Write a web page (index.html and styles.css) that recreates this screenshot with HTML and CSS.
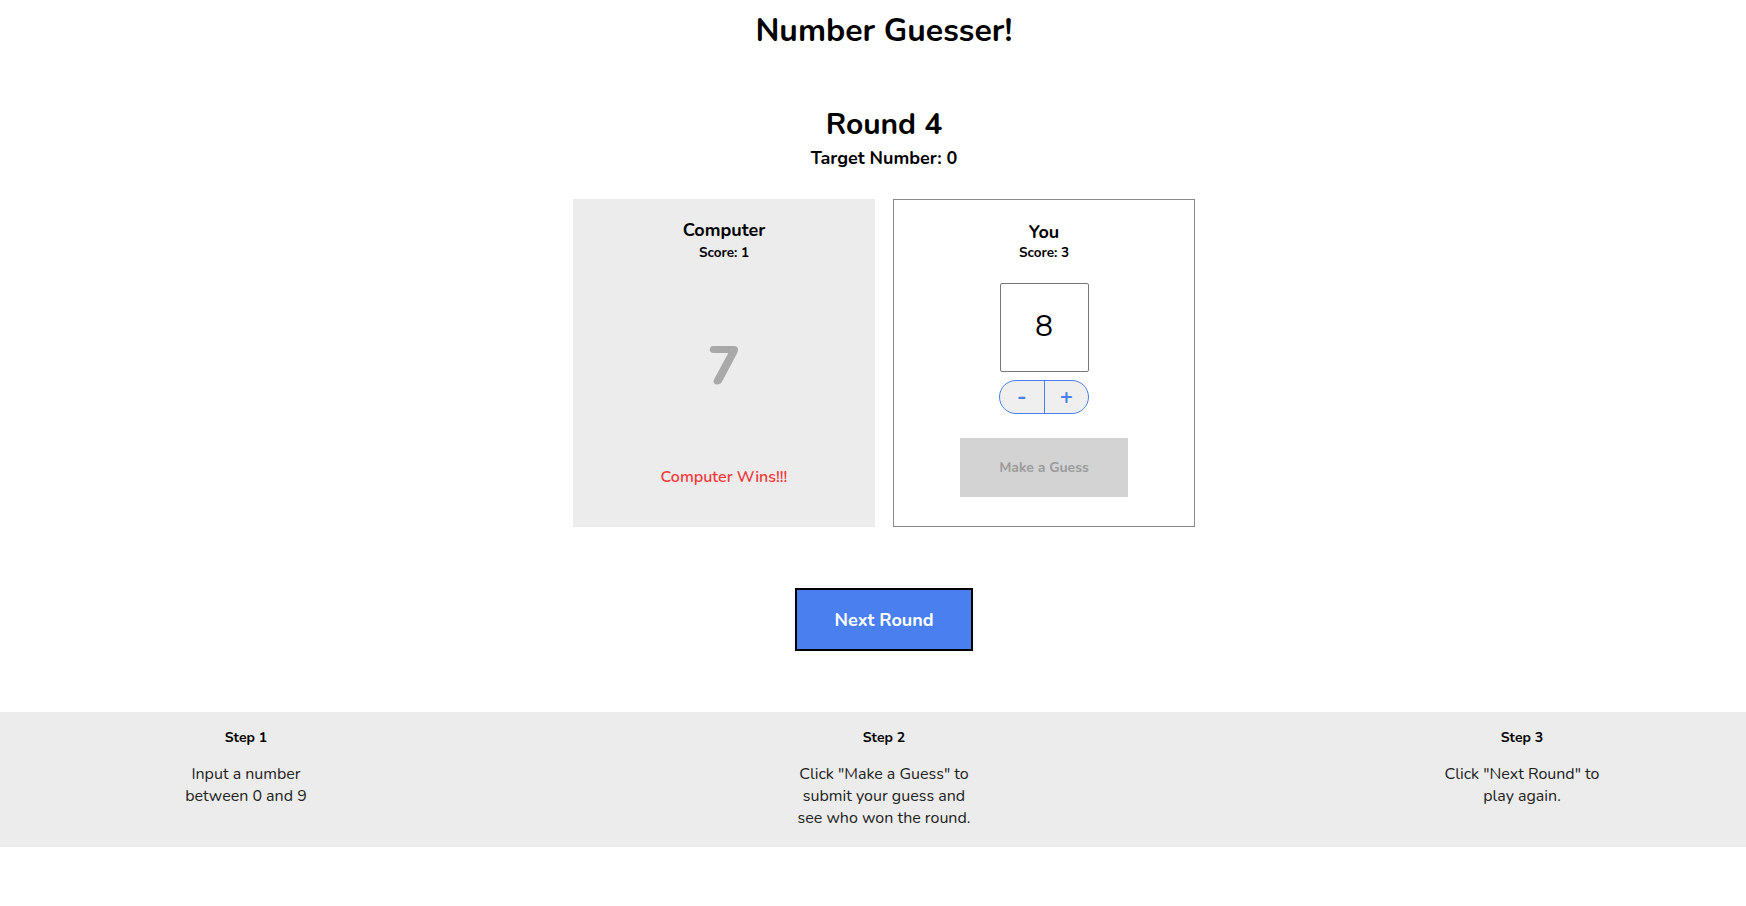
FILE: index.html
```html
<!DOCTYPE html>
<html lang="en">
<head>
<meta charset="utf-8">
<title>Number Guesser!</title>
<link rel="stylesheet" href="styles.css">
</head>
<body>
<div class="page">
  <header class="header">
    <h1 class="title">Number Guesser!</h1>
  </header>
  <main class="game">
    <section class="round">
      <h2 class="round-title">Round 4</h2>
      <p class="target">Target Number: 0</p>
    </section>
    <section class="cards">
      <div class="card card-computer">
        <h3 class="card-name">Computer</h3>
        <p class="card-score">Score: 1</p>
        <div class="computer-guess">7</div>
        <p class="winner">Computer Wins!!!</p>
      </div>
      <div class="card card-human">
        <h3 class="card-name">You</h3>
        <p class="card-score">Score: 3</p>
        <div class="guess-box">8</div>
        <div class="stepper">
          <button class="step-btn minus">-</button>
          <button class="step-btn plus">+</button>
        </div>
        <button class="guess-btn">Make a Guess</button>
      </div>
    </section>
    <div class="next-wrap">
      <button class="next-btn">Next Round</button>
    </div>
  </main>
  <footer class="steps">
    <div class="step">
      <h4 class="step-title">Step 1</h4>
      <p class="step-text">Input a number<br>between 0 and 9</p>
    </div>
    <div class="step">
      <h4 class="step-title">Step 2</h4>
      <p class="step-text">Click "Make a Guess" to<br>submit your guess and<br>see who won the round.</p>
    </div>
    <div class="step">
      <h4 class="step-title">Step 3</h4>
      <p class="step-text">Click "Next Round" to<br>play again.</p>
    </div>
  </footer>
</div>
</body>
</html>
```

FILE: styles.css
```css
html {
  overflow: hidden;
}
body {
  margin: 0;
  font-family: "Nunito", Lato, "Noto Sans", sans-serif;
  color: #000;
  background: #fff;
}
.page {
  width: 1768px;
}
.header {
  padding-top: 9px;
  text-align: center;
}
.title {
  margin: 0;
  font-size: 32px;
  line-height: 44px;
  font-weight: 700;
}
.game {
  display: flex;
  flex-direction: column;
  align-items: center;
}
.round {
  margin-top: 50px;
  text-align: center;
}
.round-title {
  margin: 0;
  font-size: 30px;
  line-height: 44px;
  font-weight: 700;
}
.target {
  margin: 0;
  font-size: 18px;
  line-height: 22px;
  font-weight: 700;
}
.cards {
  margin-top: 30px;
  display: flex;
  gap: 18px;
}
.card {
  box-sizing: border-box;
  width: 302px;
  height: 328px;
  display: flex;
  flex-direction: column;
  align-items: center;
  padding-top: 19px;
}
.card-computer {
  background: #ececec;
}
.card-human {
  border: 1px solid #8a8a8a;
  padding-top: 20px;
}
.card-name {
  margin: 0;
  font-size: 18px;
  line-height: 24px;
  font-weight: 700;
}
.card-score {
  margin: 2px 0 0;
  font-size: 13.5px;
  line-height: 18px;
  font-weight: 700;
}
.card-human .card-score {
  margin-top: 0;
}
.computer-guess {
  margin-top: 74px;
  font-size: 54px;
  line-height: 60px;
  font-weight: 800;
  color: #a9a9a9;
}
.winner {
  margin: 70px 0 0;
  font-size: 16px;
  line-height: 22px;
  font-weight: 600;
  color: #f23a3a;
}
.guess-box {
  box-sizing: border-box;
  margin-top: 21px;
  width: 89px;
  height: 89px;
  border: 1px solid #777;
  border-radius: 2px;
  display: flex;
  align-items: center;
  justify-content: center;
  font-size: 30px;
  font-weight: 400;
  padding-bottom: 2px;
}
.stepper {
  margin-top: 8px;
  display: flex;
  width: 90px;
  height: 34px;
  box-sizing: border-box;
  border: 1px solid #4a7ff0;
  border-radius: 17px;
  overflow: hidden;
  background: #efefef;
}
.step-btn {
  flex: 1;
  border: 0;
  margin: 0;
  padding: 0;
  background: transparent;
  color: #4a7ff0;
  font-family: inherit;
  font-size: 22px;
  font-weight: 700;
  line-height: 32px;
}
.minus {
  border-right: 1px solid #4a7ff0;
}
.guess-btn {
  margin-top: 24px;
  width: 168px;
  height: 59px;
  border: 0;
  background: #d3d3d3;
  color: #9b9b9b;
  font-family: inherit;
  font-size: 14px;
  font-weight: 700;
}
.next-wrap {
  margin-top: 61px;
}
.next-btn {
  box-sizing: border-box;
  width: 178px;
  height: 63px;
  border: 2px solid #000;
  background: #4a7ff0;
  color: #fff;
  font-family: inherit;
  font-size: 18px;
  font-weight: 700;
}
.steps {
  margin-top: 61px;
  background: #ececec;
  display: flex;
  justify-content: space-between;
  padding: 16px 146px 18px;
  height: 135px;
  box-sizing: border-box;
}
.step {
  width: 200px;
  text-align: center;
}
.step-title {
  margin: 0;
  font-size: 14px;
  line-height: 19px;
  font-weight: 700;
}
.step-text {
  margin: 16px 0 0;
  font-size: 16px;
  line-height: 22px;
  color: #222;
}
```
